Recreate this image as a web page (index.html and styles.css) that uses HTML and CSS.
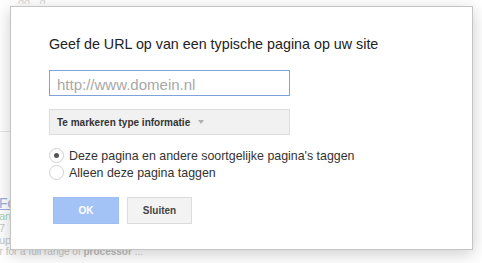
FILE: index.html
```html
<!DOCTYPE html>
<html>
<head>
<meta charset="utf-8">
<link rel="stylesheet" href="styles.css">
</head>
<body>
<div class="page">
  <div class="topfrag">gg &nbsp; g</div>
  <div class="rule"></div>
  <div class="result">
    <div class="r-title">Fo</div>
    <div class="r-url">an</div>
    <div class="r-meta">7</div>
    <div class="r-snip">up</div>
    <div class="r-snip r-last">er for a full range of <b>processor</b> ...</div>
  </div>
</div>
<div class="dialog">
  <div class="title">Geef de URL op van een typische pagina op uw site</div>
  <input class="url" type="text" placeholder="http://www.domein.nl">
  <div class="select">Te markeren type informatie<span class="caret"></span></div>
  <div class="radios">
    <div class="radio-row"><span class="radio checked"></span><span>Deze pagina en andere soortgelijke pagina's taggen</span></div>
    <div class="radio-row"><span class="radio"></span><span>Alleen deze pagina taggen</span></div>
  </div>
  <div class="buttons">
    <div class="btn ok">OK</div>
    <div class="btn close">Sluiten</div>
  </div>
</div>
</body>
</html>
```
FILE: styles.css
```css
html, body {
  margin: 0;
  padding: 0;
}
body {
  width: 482px;
  height: 263px;
  overflow: hidden;
  background: #fff;
  font-family: Arial, "Liberation Sans", sans-serif;
  position: relative;
}
.page {
  height: 263px;
  display: flex;
  flex-direction: column;
}
.topfrag {
  height: 4px;
  overflow: hidden;
  margin-left: 18px;
  font-size: 11px;
  line-height: 4px;
  color: #dadada;
}
.rule {
  margin-top: 127px;
  height: 1px;
  width: 60px;
  background: #e6e6e6;
}
.result {
  margin-top: 64px;
  margin-left: -1px;
  font-size: 11px;
  line-height: 12px;
  color: #c8c8c8;
}
.r-title {
  color: #9aaee0;
  font-size: 14px;
  line-height: 14px;
  text-decoration: underline;
}
.r-url {
  color: #a9d3b0;
}
.r-meta {
  color: #c8c8c8;
}
.r-snip {
  color: #c8c8c8;
}
.r-last {
  margin-left: -5px;
  font-size: 10px;
}
.r-last b {
  color: #c0c0c0;
}

.dialog {
  position: absolute;
  left: 10px;
  top: 6px;
  width: 463px;
  height: 244px;
  box-sizing: border-box;
  background: #fff;
  border: 1px solid #c4c4c4;
  box-shadow: 0 4px 16px rgba(0, 0, 0, 0.2);
  padding: 28px 0 0 38px;
  display: flex;
  flex-direction: column;
  align-items: flex-start;
}
.title {
  font-size: 14.3px;
  line-height: 18px;
  color: #222;
}
.url {
  margin: 17px 0 0 0;
  width: 241px;
  height: 26px;
  box-sizing: border-box;
  border: 1px solid #7fa2d8;
  padding: 2px 7px 0 7px;
  font-family: Arial, "Liberation Sans", sans-serif;
  font-size: 15px;
  outline: none;
  background: #fff;
}
.url::placeholder {
  color: #a8a8a8;
}
.select {
  margin-top: 13px;
  width: 241px;
  height: 26px;
  box-sizing: border-box;
  border: 1px solid #dcdcdc;
  background: #f1f1f1;
  padding-left: 7px;
  display: flex;
  align-items: center;
  font-size: 10px;
  font-weight: bold;
  color: #333;
}
.caret {
  margin-left: 8px;
  width: 0;
  height: 0;
  border-left: 3px solid transparent;
  border-right: 3px solid transparent;
  border-top: 4px solid #b0b0b0;
}
.radios {
  margin-top: 12px;
  display: flex;
  flex-direction: column;
}
.radio-row {
  display: flex;
  align-items: center;
  height: 17px;
  font-size: 12.4px;
  color: #333;
}
.radio {
  width: 15px;
  height: 15px;
  box-sizing: border-box;
  border: 1px solid #cfcfcf;
  border-radius: 50%;
  background: #fff;
  margin-right: 5px;
  display: flex;
  align-items: center;
  justify-content: center;
}
.radio.checked::after {
  content: "";
  width: 5px;
  height: 5px;
  border-radius: 50%;
  background: #555;
}
.buttons {
  margin-top: 16px;
  margin-left: 4px;
  display: flex;
  gap: 8px;
}
.btn {
  height: 27px;
  box-sizing: border-box;
  display: flex;
  align-items: center;
  justify-content: center;
  font-size: 10px;
  font-weight: bold;
}
.ok {
  width: 66px;
  background: #a3c2f6;
  color: #fff;
  border: 1px solid #9dbdf3;
}
.close {
  width: 65px;
  background: #f3f3f3;
  border: 1px solid #dcdcdc;
  color: #444;
}
```
